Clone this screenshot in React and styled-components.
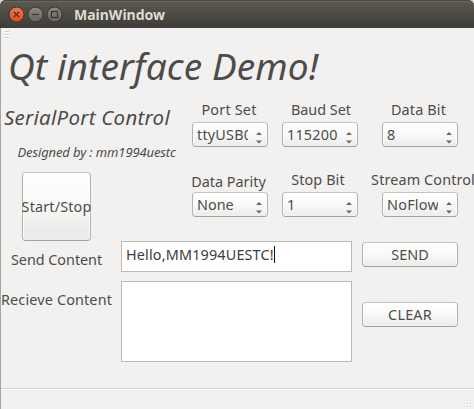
import React from 'react';
import styled, { createGlobalStyle } from 'styled-components';

const GlobalStyle = createGlobalStyle`
  * { box-sizing: border-box; }
  body { margin: 0; background: #d9dcdc; overflow: hidden; }
`;

const Window = styled.div`
  width: 474px;
  height: 409px;
  display: flex;
  flex-direction: column;
  font: 14.4px "Noto Sans", "Open Sans", sans-serif;
  color: #4c4c4c;
`;

const TitleBar = styled.header`
  flex: none;
  height: 28px;
  display: flex;
  align-items: center;
  gap: 4px;
  padding: 1px 0 0 9px;
  border-radius: 6px 6px 0 0;
  background: linear-gradient(#5d5a51, #3d3c37);
  box-shadow: inset 0 1px #4b4942, inset 0 2px #69665c;
`;

const TitleText = styled.span`
  margin-left: 8px;
  font-size: 14px;
  font-weight: bold;
  line-height: 20px;
  color: #dfdbd2;
`;

const ControlIcon = styled.svg`
  display: block;
  width: 15px;
  height: 15px;
  overflow: visible;
`;

const Body = styled.main`
  flex: 1;
  display: flex;
  flex-direction: column;
  border-left: 1px solid #a5a5a4;
  background: #f2f1f0;
  overflow: hidden;
`;

const Handle = styled.svg`
  display: block;
  flex: none;
  width: 6px;
  height: 10px;
  margin: 2px 0 0 4px;
`;

const Heading = styled.h1`
  margin: 1px 0 0 7px;
  height: 50px;
  font-size: 37px;
  font-style: italic;
  font-weight: normal;
  letter-spacing: 0.1px;
  line-height: 50px;
  white-space: nowrap;
`;

const Settings = styled.section`
  display: flex;
  height: 137px;
  margin-top: 9px;
`;

const Intro = styled.div`
  width: 191px;
  display: flex;
  flex-direction: column;
  align-items: flex-start;
`;

const Subtitle = styled.h2`
  margin: 5px 0 0 3px;
  font-size: 20.5px;
  font-style: italic;
  font-weight: normal;
  letter-spacing: 0.26px;
  line-height: 24px;
  white-space: nowrap;
`;

const Credit = styled.p`
  margin: 13px 0 0 16.5px;
  font-size: 13px;
  font-style: italic;
  letter-spacing: -0.12px;
  line-height: 20px;
  white-space: nowrap;
`;

const SettingsGrid = styled.div`
  display: grid;
  grid-template-columns: 76px 76px 76px;
  grid-template-rows: 70px 70px;
  column-gap: 14px;
  & > :nth-child(3n) { margin-left: 10px; width: 76px; }
`;

const Field = styled.label`
  display: flex;
  flex-direction: column;
  align-items: center;
  width: 76px;
`;

const Caption = styled.span`
  height: 22px;
  line-height: 20px;
  padding-top: ${(p) => p.$drop || 0}px;
  margin-left: ${(p) => p.$shift || 0}px;
  letter-spacing: ${(p) => p.$track || 0}px;
  white-space: nowrap;
`;

const buttonFace = `
  border: 1px solid;
  border-color: #c6c4c1 #b5b3b0 #a19f9b;
  border-radius: 4px;
  background: linear-gradient(#ffffff, #f9f9f8 50%, #eeeeed 90%, #f1f0f0);
  box-shadow: inset 0 1px #ffffff, inset 1px 0 #fafafa, inset -1px 0 #fafafa;
`;

const Combo = styled.span`
  ${buttonFace}
  display: flex;
  align-items: center;
  width: 76px;
  height: 25px;
  padding: 0 4px;
`;

const ComboValue = styled.span`
  width: 51px;
  height: 23px;
  line-height: 23px;
  letter-spacing: ${(p) => p.$track || 0}px;
  overflow: hidden;
  white-space: nowrap;
`;

const Arrows = styled.svg`
  display: block;
  width: 6px;
  height: 13px;
  margin: 5px 0 0 8px;
`;

const Button = styled.button`
  ${buttonFace}
  display: flex;
  flex: none;
  align-items: center;
  justify-content: center;
  width: ${(p) => p.$w}px;
  height: ${(p) => p.$h}px;
  padding: 0;
  font: inherit;
  line-height: 20px;
  color: inherit;
  letter-spacing: ${(p) => p.$track || 0}px;
  white-space: nowrap;
`;

const StartButton = styled(Button)`
  margin: 10px 0 0 21px;
  background: linear-gradient(#ffffff, #f8f8f7 50%, #ebebea 85%, #efeeee);
`;

const Messages = styled.section`
  display: grid;
  grid-template-columns: 120px 231px 96px;
  grid-template-rows: 31px 81px;
  row-gap: 9px;
  margin-top: 4px;
  & > button { margin-left: 10px; }
`;

const RowLabel = styled.span`
  justify-self: start;
  margin: ${(p) => p.$top}px 0 0 ${(p) => p.$left}px;
  line-height: 20px;
  letter-spacing: ${(p) => p.$track}px;
  white-space: nowrap;
`;

const TextBox = styled.div`
  display: flex;
  align-items: flex-start;
  padding: 4px;
  border: 1px solid #bbbab5;
  background: #ffffff;
  color: #3c3c3c;
  line-height: 18px;
  letter-spacing: 0.16px;
`;

const Caret = styled.span`
  width: 1px;
  height: 17px;
  background: #111111;
`;

const SideButton = styled(Button)`
  margin-top: ${(p) => p.$top}px;
`;

const StatusBar = styled.footer`
  display: flex;
  justify-content: flex-end;
  align-items: flex-end;
  height: 21px;
  margin-top: auto;
  border-top: 1px solid #d4d3d1;
  box-shadow: inset 0 1px #fdfdfd;
  padding: 0 1px 0 0;
`;

const Grip = styled.svg`
  display: block;
  width: 12px;
  height: 12px;
`;

function WindowControl({ top, bottom, glyph, children }) {
  const id = `face-${top.slice(1)}`;
  return (
    <ControlIcon viewBox="0 0 15 15">
      <defs>
        <linearGradient id={id} x2="0" y2="1">
          <stop stopColor={top} />
          <stop offset="1" stopColor={bottom} />
        </linearGradient>
      </defs>
      <circle cx="7.5" cy="7.5" r="7.5" fill={`url(#${id})`} stroke="#35342f" strokeWidth="1" />
      <g fill="none" stroke={glyph} strokeWidth="1.2">{children}</g>
    </ControlIcon>
  );
}

const fields = [
  { name: 'Port Set', value: 'ttyUSB0', track: 0.2, shift: -2, valueTrack: 0.2 },
  { name: 'Baud Set', value: '115200', track: 0, shift: 2, valueTrack: 0.2 },
  { name: 'Data Bit', value: '8', track: 0.17, shift: -3 },
  { name: 'Data Parity', value: 'None', track: 0, shift: -3, drop: 2 },
  { name: 'Stop Bit', value: '1', track: 0.1, shift: -4 },
  { name: 'Stream Control', value: 'NoFlow', track: 0.12, shift: 6, valueTrack: 0.25 },
];

const gripDots = [[9, 0], [6, 3], [9, 3], [3, 6], [6, 6], [9, 6], [0, 9], [3, 9], [6, 9], [9, 9]];

export default function App() {
  return (
    <>
      <GlobalStyle />
      <Window>
        <TitleBar>
          <WindowControl top="#f4794f" bottom="#df4d1c" glyph="#44291f">
            <path d="M4.8 4.8l5.4 5.4M10.2 4.8l-5.4 5.4" />
          </WindowControl>
          <WindowControl top="#8b8980" bottom="#66645d" glyph="#36352f">
            <path d="M4 7.5h7" />
          </WindowControl>
          <WindowControl top="#8a8980" bottom="#66645d" glyph="#36352f">
            <rect x="4.5" y="4.5" width="6" height="6" />
          </WindowControl>
          <TitleText>MainWindow</TitleText>
        </TitleBar>
        <Body>
          <Handle viewBox="0 0 6 10">
            {[1, 4, 7].map((y) => (
              <g key={y}>
                <rect y={y} width="4" height="1" fill="#d0cfcd" />
                <rect y={y + 1} width="4" height="1" fill="#ffffff" />
              </g>
            ))}
          </Handle>
          <Heading>Qt interface Demo!</Heading>
          <Settings>
            <Intro>
              <Subtitle>SerialPort Control</Subtitle>
              <Credit>Designed by : mm1994uestc</Credit>
              <StartButton $w={69} $h={69} $track={0.15}>Start/Stop</StartButton>
            </Intro>
            <SettingsGrid>
              {fields.map((f) => (
                <Field key={f.name}>
                  <Caption $track={f.track} $shift={f.shift} $drop={f.drop}>{f.name}</Caption>
                  <Combo>
                    <ComboValue $track={f.valueTrack}>{f.value}</ComboValue>
                    <Arrows viewBox="0 0 6 13" fill="#686868">
                      <path d="M0 4L3 1L6 4zM0 9.5L3 12.5L6 9.5z" />
                    </Arrows>
                  </Combo>
                </Field>
              ))}
            </SettingsGrid>
          </Settings>
          <Messages>
            <RowLabel $top={9} $left={10} $track={-0.04}>Send Content</RowLabel>
            <TextBox>Hello,MM1994UESTC!<Caret /></TextBox>
            <SideButton $w={96} $h={25} $top={1}>SEND</SideButton>
            <RowLabel $top={9} $left={0} $track={0.15}>Recieve Content</RowLabel>
            <TextBox />
            <SideButton $w={96} $h={25} $top={21} $track={0.2}>CLEAR</SideButton>
          </Messages>
          <StatusBar>
            <Grip viewBox="0 0 12 12">
              {gripDots.map(([x, y]) => (
                <g key={`${x}-${y}`}>
                  <rect x={x + 1} y={y + 1} width="1" height="1" fill="#ffffff" />
                  <rect x={x} y={y} width="1" height="1" fill="#d0cfcc" />
                </g>
              ))}
            </Grip>
          </StatusBar>
        </Body>
      </Window>
    </>
  );
}
